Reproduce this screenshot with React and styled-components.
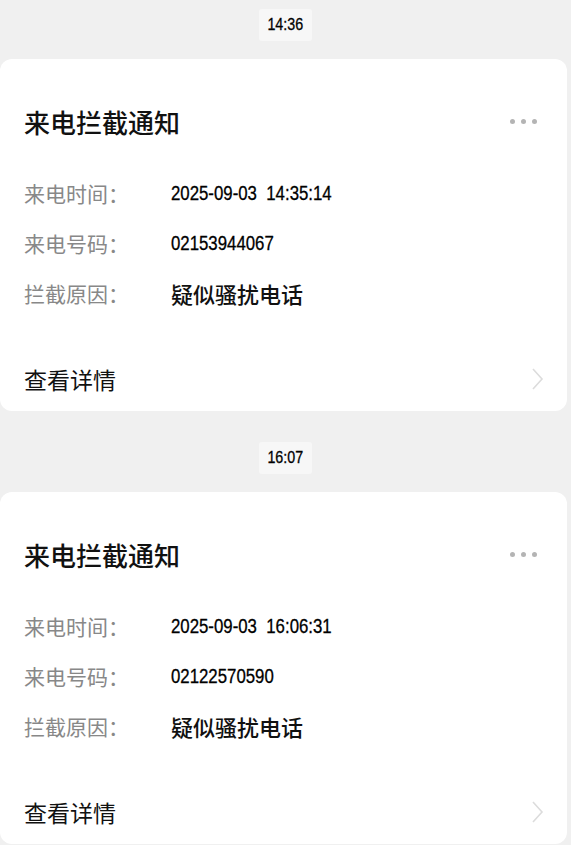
import styled, { createGlobalStyle } from "styled-components";

const GlobalStyle = createGlobalStyle`
  html, body {
    margin: 0;
    padding: 0;
    background: #f0f0f0;
  }
  body {
    font-family: "Liberation Sans", "Noto Sans CJK SC", sans-serif;
    color: #111;
  }
`;

const Page = styled.div`
  width: 571px;
  min-height: 845px;
  overflow: hidden;
  display: flex;
  flex-direction: column;
`;

const Item = styled.div`
  display: flex;
  flex-direction: column;
  align-items: center;
  padding-top: ${(p) => (p.$first ? "9px" : "31px")};
`;

const TimePill = styled.div`
  width: 53px;
  height: 32px;
  display: flex;
  align-items: center;
  justify-content: center;
  background: #f7f7f7;
  border-radius: 3px;
  margin-bottom: 18px;
`;

// narrow digits, like the condensed system face in the screenshot
const Narrow = styled.span`
  display: inline-block;
  font-family: "Liberation Sans", sans-serif;
  font-size: ${(p) => p.$size || "20px"};
  color: #000;
  white-space: pre;
  -webkit-text-stroke: 0.3px #000;
  transform: scaleX(0.84);
  transform-origin: ${(p) => (p.$center ? "center" : "left")};
`;

const Card = styled.div`
  align-self: flex-start;
  width: 567px;
  box-sizing: border-box;
  background: #fff;
  border-radius: 12px;
  padding: 0 22px 0 24px;
`;

const Header = styled.div`
  margin-top: 44px;
  height: 36px;
  display: flex;
  align-items: center;
  justify-content: space-between;
`;

const Title = styled.h2`
  margin: 0;
  font-family: "Noto Sans CJK SC", sans-serif;
  font-size: 26px;
  font-weight: 500;
  color: #111;
`;

const Dots = styled.div`
  display: flex;
  gap: 6px;
  margin-right: 8px;
  span {
    width: 5px;
    height: 5px;
    border-radius: 50%;
    background: #b4b4b4;
  }
`;

const Rows = styled.div`
  margin-top: 29px;
`;

const Row = styled.div`
  height: 50px;
  display: flex;
  align-items: center;
`;

const Label = styled.span`
  width: 147px;
  flex: none;
  font-family: "Noto Sans CJK SC", sans-serif;
  font-size: 21px;
  color: #888;
`;

const Reason = styled.span`
  font-family: "Noto Sans CJK SC", sans-serif;
  font-size: 22px;
  font-weight: 500;
  color: #111;
`;

const Footer = styled.div`
  margin-top: 29px;
  height: 64px;
  display: flex;
  align-items: center;
  justify-content: space-between;
`;

const LinkText = styled.span`
  font-family: "Noto Sans CJK SC", sans-serif;
  font-size: 23px;
  color: #111;
`;

const Chevron = () => (
  <svg width="14" height="24" viewBox="0 0 14 24" fill="none">
    <path d="M2 2 L11 12 L2 22" stroke="#dcdcdc" strokeWidth="1.6" />
  </svg>
);

const records = [
  { time: "14:36", at: "2025-09-03  14:35:14", number: "02153944067", reason: "疑似骚扰电话" },
  { time: "16:07", at: "2025-09-03  16:06:31", number: "02122570590", reason: "疑似骚扰电话" },
];

export default function App() {
  return (
    <Page>
      <GlobalStyle />
      {records.map((r, i) => (
        <Item key={i} $first={i === 0}>
          <TimePill>
            <Narrow $size="17px" $center>
              {r.time}
            </Narrow>
          </TimePill>
          <Card>
            <Header>
              <Title>来电拦截通知</Title>
              <Dots>
                <span />
                <span />
                <span />
              </Dots>
            </Header>
            <Rows>
              <Row>
                <Label>来电时间：</Label>
                <Narrow>{r.at}</Narrow>
              </Row>
              <Row>
                <Label>来电号码：</Label>
                <Narrow>{r.number}</Narrow>
              </Row>
              <Row>
                <Label>拦截原因：</Label>
                <Reason>{r.reason}</Reason>
              </Row>
            </Rows>
            <Footer>
              <LinkText>查看详情</LinkText>
              <Chevron />
            </Footer>
          </Card>
        </Item>
      ))}
    </Page>
  );
}
